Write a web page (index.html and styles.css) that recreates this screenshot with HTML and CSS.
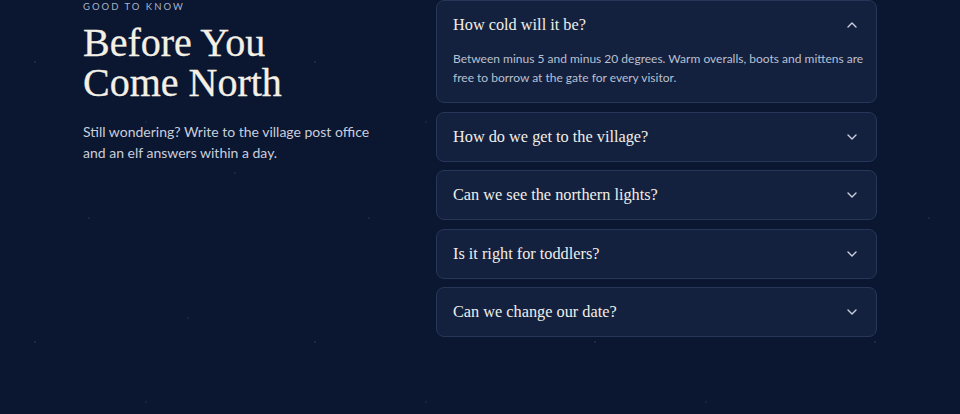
FILE: index.html
```html
<!DOCTYPE html>
<html lang="en">
<head>
    <meta charset="UTF-8">
    <meta name="viewport" content="width=device-width, initial-scale=1.0">
    <title>Good to Know - Before You Come North</title>
    <link rel="stylesheet" href="styles.css">
</head>
<body>
    <section class="faq">
        <div class="faq-intro">
            <p class="eyebrow">Good to know</p>
            <h2>Before You<br>Come North</h2>
            <p class="lead">Still wondering? Write to the village post office and an elf answers within a day.</p>
        </div>

        <div class="faq-list">
            <div class="faq-item open">
                <button class="faq-q">How cold will it be?
                    <svg class="chev" viewBox="0 0 10 6"><path d="M1 1l4 4 4-4"/></svg>
                </button>
                <p class="faq-a">Between minus 5 and minus 20 degrees. Warm overalls, boots and mittens are free to borrow at the gate for every visitor.</p>
            </div>
            <div class="faq-item">
                <button class="faq-q">How do we get to the village?
                    <svg class="chev" viewBox="0 0 10 6"><path d="M1 1l4 4 4-4"/></svg>
                </button>
            </div>
            <div class="faq-item">
                <button class="faq-q">Can we see the northern lights?
                    <svg class="chev" viewBox="0 0 10 6"><path d="M1 1l4 4 4-4"/></svg>
                </button>
            </div>
            <div class="faq-item">
                <button class="faq-q">Is it right for toddlers?
                    <svg class="chev" viewBox="0 0 10 6"><path d="M1 1l4 4 4-4"/></svg>
                </button>
            </div>
            <div class="faq-item">
                <button class="faq-q">Can we change our date?
                    <svg class="chev" viewBox="0 0 10 6"><path d="M1 1l4 4 4-4"/></svg>
                </button>
            </div>
        </div>
    </section>
</body>
</html>
```

FILE: styles.css
```css
body {
    margin: 0;
    min-height: 100vh;
    font-family: 'Lato', 'Noto Sans', sans-serif;
    color: #c9cedb;
    background-color: #0b1631;
    /* faint starfield */
    background-image:
        radial-gradient(circle at 35px 62px, rgba(160, 180, 220, 0.22) 0, rgba(160, 180, 220, 0) 1.5px),
        radial-gradient(circle at 89px 218px, rgba(160, 180, 220, 0.18) 0, rgba(160, 180, 220, 0) 1.5px),
        radial-gradient(circle at 188px 38px, rgba(160, 180, 220, 0.15) 0, rgba(160, 180, 220, 0) 1.5px),
        radial-gradient(circle at 235px 173px, rgba(160, 180, 220, 0.18) 0, rgba(160, 180, 220, 0) 1.5px),
        radial-gradient(circle at 146px 122px, rgba(160, 180, 220, 0.15) 0, rgba(160, 180, 220, 0) 1.5px);
    background-size: 280px 280px;
}
.faq {
    width: 794px;
    margin: 0 auto;
    display: grid;
    grid-template-columns: 1fr 441px;
    gap: 56px;
    align-items: start;
}
.eyebrow {
    margin: 0;
    font-size: 9.5px;
    line-height: 14px;
    letter-spacing: 2px;
    text-transform: uppercase;
    color: #a9b2c6;
}
.faq-intro h2 {
    margin: 9px 0 0;
    font-family: 'Liberation Serif', serif;
    font-weight: 400;
    font-size: 40px;
    line-height: 40px;
    color: #f4f0e6;
    -webkit-text-stroke: 0.3px #f4f0e6;
}
.lead {
    margin: 18px 0 0;
    font-size: 14px;
    line-height: 21px;
    color: #c9cedb;
}
.faq-list {
    display: flex;
    flex-direction: column;
    gap: 8.5px;
}
.faq-item {
    background: #13213f;
    border: 1px solid #263658;
    border-radius: 8px;
}
.faq-q {
    width: 100%;
    display: flex;
    align-items: center;
    justify-content: space-between;
    padding: 12px 19px 12px 16px;
    background: none;
    border: none;
    text-align: left;
    font-family: 'Liberation Serif', serif;
    font-size: 16.3px;
    line-height: 24px;
    color: #f1eee7;
    cursor: pointer;
}
.chev {
    width: 10px;
    height: 6px;
    fill: none;
    stroke: #c9cfdc;
    stroke-width: 1.4;
    stroke-linecap: round;
    stroke-linejoin: round;
}
.open .chev {
    transform: rotate(180deg);
}
.faq-a {
    margin: 0;
    padding: 0 10px 15px 16px;
    font-size: 12px;
    line-height: 19px;
    color: #b9c0d0;
}
```
